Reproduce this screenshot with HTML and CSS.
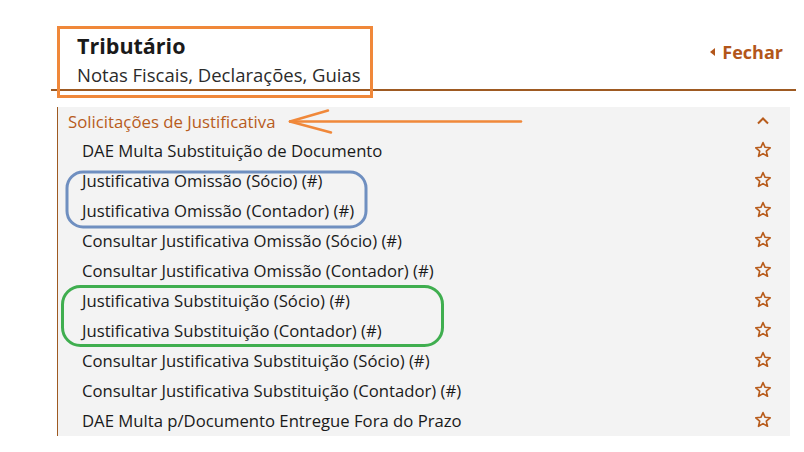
FILE: index.html
```html
<!DOCTYPE html>
<html lang="pt">
<head>
<meta charset="utf-8">
<link rel="stylesheet" href="styles.css">
</head>
<body>
<div class="page">
  <header class="top">
    <div class="titles">
      <h1 class="title">Tributário</h1>
      <div class="subtitle">Notas Fiscais, Declarações, Guias</div>
    </div>
    <a class="close"><span class="tri"></span>Fechar</a>
  </header>
  <section class="panel">
    <div class="group-head">
      <span>Solicitações de Justificativa</span>
      <svg class="icon" width="16" height="16" viewBox="0 0 16 16"><path d="M3 10.5 L8 5.5 L13 10.5" fill="none" stroke="#b85c1c" stroke-width="2"/></svg>
    </div>
    <ul class="items">
      <li><span>DAE Multa Substituição de Documento</span><svg class="icon" width="18" height="18" viewBox="0 0 18 18"><path class="star" d="M9 1.6 L11.1 6.3 L16.2 6.8 L12.3 10.2 L13.5 15.3 L9 12.6 L4.5 15.3 L5.7 10.2 L1.8 6.8 L6.9 6.3 Z"/></svg></li>
      <li><span>Justificativa Omissão (Sócio) (#)</span><svg class="icon" width="18" height="18" viewBox="0 0 18 18"><path class="star" d="M9 1.6 L11.1 6.3 L16.2 6.8 L12.3 10.2 L13.5 15.3 L9 12.6 L4.5 15.3 L5.7 10.2 L1.8 6.8 L6.9 6.3 Z"/></svg></li>
      <li><span>Justificativa Omissão (Contador) (#)</span><svg class="icon" width="18" height="18" viewBox="0 0 18 18"><path class="star" d="M9 1.6 L11.1 6.3 L16.2 6.8 L12.3 10.2 L13.5 15.3 L9 12.6 L4.5 15.3 L5.7 10.2 L1.8 6.8 L6.9 6.3 Z"/></svg></li>
      <li><span>Consultar Justificativa Omissão (Sócio) (#)</span><svg class="icon" width="18" height="18" viewBox="0 0 18 18"><path class="star" d="M9 1.6 L11.1 6.3 L16.2 6.8 L12.3 10.2 L13.5 15.3 L9 12.6 L4.5 15.3 L5.7 10.2 L1.8 6.8 L6.9 6.3 Z"/></svg></li>
      <li><span>Consultar Justificativa Omissão (Contador) (#)</span><svg class="icon" width="18" height="18" viewBox="0 0 18 18"><path class="star" d="M9 1.6 L11.1 6.3 L16.2 6.8 L12.3 10.2 L13.5 15.3 L9 12.6 L4.5 15.3 L5.7 10.2 L1.8 6.8 L6.9 6.3 Z"/></svg></li>
      <li><span>Justificativa Substituição (Sócio) (#)</span><svg class="icon" width="18" height="18" viewBox="0 0 18 18"><path class="star" d="M9 1.6 L11.1 6.3 L16.2 6.8 L12.3 10.2 L13.5 15.3 L9 12.6 L4.5 15.3 L5.7 10.2 L1.8 6.8 L6.9 6.3 Z"/></svg></li>
      <li><span>Justificativa Substituição (Contador) (#)</span><svg class="icon" width="18" height="18" viewBox="0 0 18 18"><path class="star" d="M9 1.6 L11.1 6.3 L16.2 6.8 L12.3 10.2 L13.5 15.3 L9 12.6 L4.5 15.3 L5.7 10.2 L1.8 6.8 L6.9 6.3 Z"/></svg></li>
      <li><span>Consultar Justificativa Substituição (Sócio) (#)</span><svg class="icon" width="18" height="18" viewBox="0 0 18 18"><path class="star" d="M9 1.6 L11.1 6.3 L16.2 6.8 L12.3 10.2 L13.5 15.3 L9 12.6 L4.5 15.3 L5.7 10.2 L1.8 6.8 L6.9 6.3 Z"/></svg></li>
      <li><span>Consultar Justificativa Substituição (Contador) (#)</span><svg class="icon" width="18" height="18" viewBox="0 0 18 18"><path class="star" d="M9 1.6 L11.1 6.3 L16.2 6.8 L12.3 10.2 L13.5 15.3 L9 12.6 L4.5 15.3 L5.7 10.2 L1.8 6.8 L6.9 6.3 Z"/></svg></li>
      <li><span>DAE Multa p/Documento Entregue Fora do Prazo</span><svg class="icon" width="18" height="18" viewBox="0 0 18 18"><path class="star" d="M9 1.6 L11.1 6.3 L16.2 6.8 L12.3 10.2 L13.5 15.3 L9 12.6 L4.5 15.3 L5.7 10.2 L1.8 6.8 L6.9 6.3 Z"/></svg></li>
    </ul>
  </section>
</div>
<svg class="annotations" width="804" height="452" viewBox="0 0 804 452">
  <rect x="58.5" y="27.5" width="313" height="69" fill="none" stroke="#f0883a" stroke-width="3"/>
  <g stroke="#f0883a" stroke-width="2.5" fill="none" stroke-linecap="round">
    <line x1="521" y1="121.5" x2="290" y2="121.5"/>
    <line x1="290" y1="121.5" x2="328" y2="110.5"/>
    <line x1="290" y1="121.5" x2="331" y2="132.5"/>
  </g>
  <rect x="67" y="172" width="299" height="55" rx="16" fill="none" stroke="#6f8fc0" stroke-width="3"/>
  <rect x="62.5" y="286.5" width="380" height="59" rx="18" fill="none" stroke="#3fae4f" stroke-width="3"/>
</svg>
</body>
</html>
```
FILE: styles.css
```css
html, body {
  margin: 0;
  padding: 0;
  background: #ffffff;
}
body {
  font-family: "Open Sans", "Noto Sans", sans-serif;
  color: #1a1a1a;
  width: 804px;
  height: 452px;
  overflow: hidden;
  position: relative;
}
.page {
  display: flex;
  flex-direction: column;
}
.top {
  margin-left: 51px;
  width: 745px;
  height: 91px;
  border-bottom: 2px solid #9e5a22;
  display: flex;
  justify-content: space-between;
  align-items: flex-start;
  box-sizing: border-box;
}
.titles {
  padding-left: 26px;
  padding-top: 32px;
}
.title {
  margin: 0;
  font-size: 21.5px;
  font-weight: 700;
  line-height: 28px;
  color: #1a1a1a;
}
.subtitle {
  font-size: 18.5px;
  line-height: 26px;
  color: #2b2b2b;
  margin-top: 2px;
}
.close {
  display: flex;
  align-items: center;
  gap: 7px;
  margin-top: 40px;
  margin-right: 13px;
  font-size: 18px;
  font-weight: 700;
  color: #b2561a;
}
.tri {
  width: 0;
  height: 0;
  border-top: 4.5px solid transparent;
  border-bottom: 4.5px solid transparent;
  border-right: 5px solid #b2561a;
}
.panel {
  margin-top: 16px;
  margin-left: 57px;
  width: 733px;
  height: 329px;
  background: #f3f3f3;
  border-left: 1.5px solid #9e5a22;
  box-sizing: border-box;
}
.group-head {
  height: 28px;
  display: flex;
  align-items: center;
  justify-content: space-between;
  padding-left: 10px;
  padding-right: 19px;
  font-size: 16.8px;
  color: #b85c1c;
}
.items {
  list-style: none;
  margin: 0;
  padding: 0;
}
.items li {
  height: 30px;
  display: flex;
  align-items: center;
  justify-content: space-between;
  padding-left: 24px;
  padding-right: 18px;
  font-size: 16.7px;
  color: #1a1a1a;
}
.icon {
  display: block;
  flex: none;
}
.star {
  fill: none;
  stroke: #b85c1c;
  stroke-width: 1.6;
  stroke-linejoin: round;
}
.annotations {
  position: absolute;
  left: 0;
  top: 0;
  pointer-events: none;
}
```
